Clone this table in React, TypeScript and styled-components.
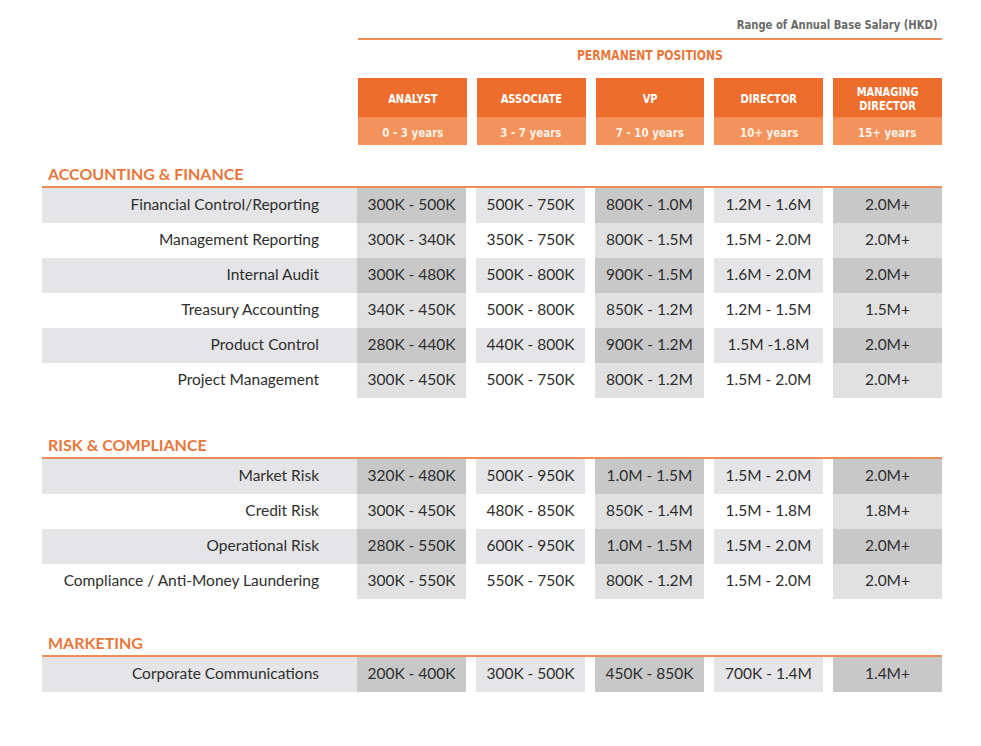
import React from "react";
import styled, { createGlobalStyle } from "styled-components";

const Global = createGlobalStyle`
  html, body { margin: 0; padding: 0; background: #ffffff; }
  body { font-family: Lato, "Open Sans", sans-serif; }
`;

const ORANGE = "#ee6d2c";
const ORANGE_LIGHT = "#f3925a";
const ORANGE_TEXT = "#e8773c";
const RULE = "#ef8d58";
const NARROW = `"Liberation Sans Narrow", "DejaVu Sans Condensed", "Roboto", sans-serif`;

const Page = styled.div`
  width: 900px;
  padding: 16px 0 40px 42px;
`;

const Squeeze = styled.span<{ $origin?: string; $scale?: number }>`
  display: inline-block;
  transform: scaleX(${(p) => p.$scale ?? 0.86});
  transform-origin: ${(p) => p.$origin ?? "center"};
  white-space: nowrap;
`;

const RangeTitle = styled.div`
  text-align: right;
  padding-right: 5px;
  font-family: ${NARROW};
  font-weight: 700;
  font-size: 13px;
  line-height: 18px;
  color: #6a6a6a;
  margin-bottom: 4px;
`;

const HeaderArea = styled.div`
  margin-left: 316px;
  width: 584px;
`;

const TopRule = styled.div`
  height: 2px;
  background: ${RULE};
`;

const Permanent = styled.div`
  margin-top: 6px;
  text-align: center;
  font-family: ${NARROW};
  font-weight: 700;
  font-size: 14px;
  line-height: 18px;
  color: ${ORANGE_TEXT};
`;

const PositionRow = styled.div`
  display: flex;
  gap: 10px;
  margin-top: 14px;
`;

const Position = styled.div`
  width: 109px;
  display: flex;
  flex-direction: column;
`;

const PositionName = styled.div`
  height: 40px;
  background: ${ORANGE};
  color: #ffffff;
  display: flex;
  align-items: center;
  justify-content: center;
  text-align: center;
  font-family: ${NARROW};
  font-weight: 700;
  font-size: 12px;
  line-height: 14px;
  padding-top: 2px;
  border-bottom: 1px solid #f48d55;
  box-sizing: border-box;
`;

const PositionYears = styled.div`
  height: 27px;
  background: ${ORANGE_LIGHT};
  color: #fff3ea;
  display: flex;
  align-items: center;
  justify-content: center;
  font-family: ${NARROW};
  font-weight: 700;
  font-size: 13px;
  padding-top: 1px;
  box-sizing: border-box;
`;

const Section = styled.section<{ $gap: number }>`
  margin-top: ${(p) => p.$gap}px;
`;

const SectionTitle = styled.h2`
  margin: 0;
  padding: 0 0 2px 6px;
  font-family: Lato, "Open Sans", sans-serif;
  font-weight: 700;
  font-size: 16px;
  line-height: 20px;
  color: ${ORANGE_TEXT};
  border-bottom: 2px solid ${RULE};
`;

const Row = styled.div`
  display: flex;
  height: 35px;
`;

const Label = styled.div<{ $odd: boolean }>`
  width: 316px;
  box-sizing: border-box;
  padding: 0 38px 3px 0;
  display: flex;
  align-items: center;
  justify-content: flex-end;
  background: ${(p) => (p.$odd ? "#e5e5e7" : "#ffffff")};
  font-size: 15.5px;
  line-height: 20px;
  color: #2e2e2e;
`;

const Cells = styled.div`
  display: flex;
  gap: 10px;
`;

const Cell = styled.div<{ $odd: boolean; $shade: boolean }>`
  width: 109px;
  box-sizing: border-box;
  padding-bottom: 3px;
  display: flex;
  align-items: center;
  justify-content: center;
  font-size: 15.5px;
  line-height: 20px;
  color: #2e2e2e;
  background: ${(p) =>
    p.$shade
      ? p.$odd
        ? "#c8c8c9"
        : "#e1e1e2"
      : p.$odd
      ? "#e5e5e7"
      : "#ffffff"};
`;

const positions = [
  { name: "ANALYST", years: "0 - 3 years" },
  { name: "ASSOCIATE", years: "3 - 7 years" },
  { name: "VP", years: "7 - 10 years" },
  { name: "DIRECTOR", years: "10+ years" },
  { name: "MANAGING\nDIRECTOR", years: "15+ years" },
];

type RowData = [string, string, string, string, string, string];

const sections: { title: string; gap: number; rows: RowData[] }[] = [
  {
    title: "ACCOUNTING & FINANCE",
    gap: 19,
    rows: [
      ["Financial Control/Reporting", "300K - 500K", "500K - 750K", "800K - 1.0M", "1.2M - 1.6M", "2.0M+"],
      ["Management Reporting", "300K - 340K", "350K - 750K", "800K - 1.5M", "1.5M - 2.0M", "2.0M+"],
      ["Internal Audit", "300K - 480K", "500K - 800K", "900K - 1.5M", "1.6M - 2.0M", "2.0M+"],
      ["Treasury Accounting", "340K - 450K", "500K - 800K", "850K - 1.2M", "1.2M - 1.5M", "1.5M+"],
      ["Product Control", "280K - 440K", "440K - 800K", "900K - 1.2M", "1.5M -1.8M", "2.0M+"],
      ["Project Management", "300K - 450K", "500K - 750K", "800K - 1.2M", "1.5M - 2.0M", "2.0M+"],
    ],
  },
  {
    title: "RISK & COMPLIANCE",
    gap: 37,
    rows: [
      ["Market Risk", "320K - 480K", "500K - 950K", "1.0M - 1.5M", "1.5M - 2.0M", "2.0M+"],
      ["Credit Risk", "300K - 450K", "480K - 850K", "850K - 1.4M", "1.5M - 1.8M", "1.8M+"],
      ["Operational Risk", "280K - 550K", "600K - 950K", "1.0M - 1.5M", "1.5M - 2.0M", "2.0M+"],
      ["Compliance / Anti-Money Laundering", "300K - 550K", "550K - 750K", "800K - 1.2M", "1.5M - 2.0M", "2.0M+"],
    ],
  },
  {
    title: "MARKETING",
    gap: 34,
    rows: [
      ["Corporate Communications", "200K - 400K", "300K - 500K", "450K - 850K", "700K - 1.4M", "1.4M+"],
    ],
  },
];

export default function App() {
  return (
    <>
      <Global />
      <Page>
        <RangeTitle>
          <Squeeze $origin="right">Range of Annual Base Salary (HKD)</Squeeze>
        </RangeTitle>
        <HeaderArea>
          <TopRule />
          <Permanent>
            <Squeeze>PERMANENT POSITIONS</Squeeze>
          </Permanent>
          <PositionRow>
            {positions.map((p) => (
              <Position key={p.name}>
                <PositionName>
                  <Squeeze $scale={0.92}>
                    {p.name.split("\n").map((l, i) => (
                      <React.Fragment key={i}>
                        {i > 0 && <br />}
                        {l}
                      </React.Fragment>
                    ))}
                  </Squeeze>
                </PositionName>
                <PositionYears>
                  <Squeeze $scale={0.88}>{p.years}</Squeeze>
                </PositionYears>
              </Position>
            ))}
          </PositionRow>
        </HeaderArea>
        {sections.map((s) => (
          <Section key={s.title} $gap={s.gap}>
            <SectionTitle>{s.title}</SectionTitle>
            {s.rows.map((r, ri) => {
              const odd = ri % 2 === 0;
              return (
                <Row key={r[0]}>
                  <Label $odd={odd}>{r[0]}</Label>
                  <Cells>
                    {r.slice(1).map((v, ci) => (
                      <Cell key={ci} $odd={odd} $shade={ci % 2 === 0}>
                        {v}
                      </Cell>
                    ))}
                  </Cells>
                </Row>
              );
            })}
          </Section>
        ))}
      </Page>
    </>
  );
}
